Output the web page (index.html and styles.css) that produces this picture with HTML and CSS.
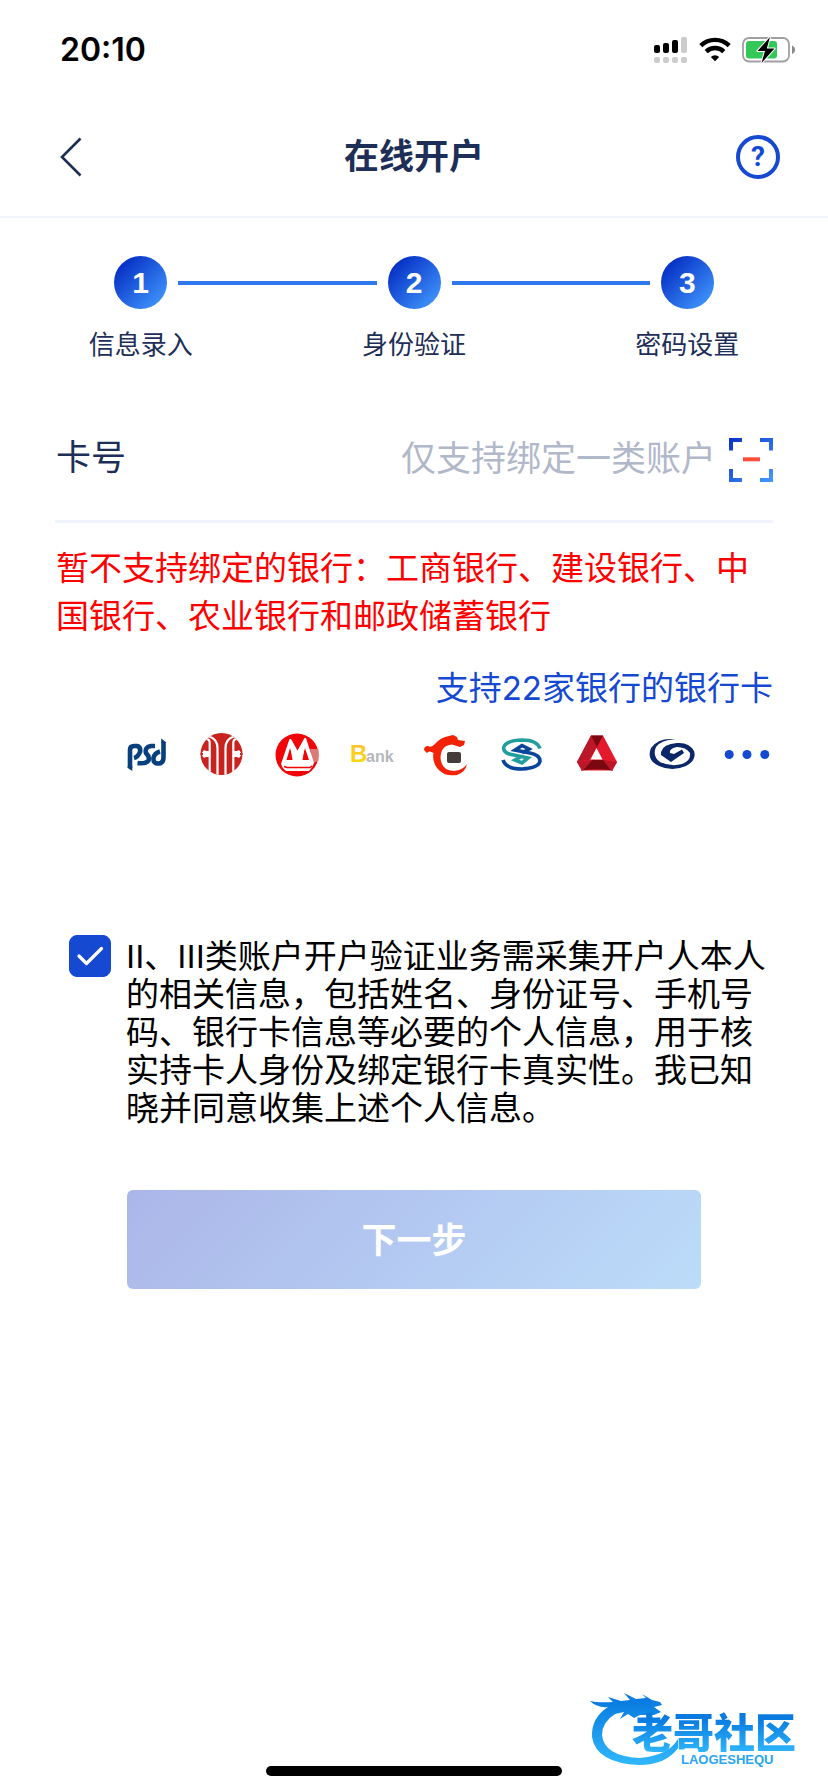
FILE: index.html
```html
<!DOCTYPE html>
<html lang="zh-CN">
<head>
<meta charset="utf-8">
<meta name="viewport" content="width=device-width">
<title>在线开户</title>
<link rel="stylesheet" href="styles.css">
</head>
<body>
<div class="status-bar">
  <time class="clock">20:10</time>
  <div class="status-icons">
    <svg width="34" height="26" viewBox="0 0 34 26" aria-hidden="true">
      <g fill="#000"><rect y="8" width="6" height="8" rx="2"/><rect x="9" y="6" width="6" height="10" rx="2"/><rect x="18" y="3" width="6" height="13" rx="2"/></g>
      <g fill="#ccc"><rect x="27" width="6" height="16" rx="2"/><rect y="20" width="6" height="6" rx="2"/><rect x="9" y="20" width="6" height="6" rx="2"/><rect x="18" y="20" width="6" height="6" rx="2"/><rect x="27" y="20" width="6" height="6" rx="2"/></g>
    </svg>
    <svg width="32" height="26" viewBox="0 0 32 26" aria-hidden="true">
      <g fill="none" stroke="#000" stroke-width="4.4"><path d="M1.8 8.600a20.400 20.400 0 0 1 28.400 0"/><path d="M7.200 14.600a12.600 12.600 0 0 1 17.600 0"/></g>
      <path d="M16 24.200l-4.200-4.300a6.300 6.300 0 0 1 8.400 0z"/>
    </svg>
    <svg width="54" height="26" viewBox="0 0 54 26" aria-hidden="true">
      <rect x="1" y="1" width="46" height="23.500" rx="6" fill="none" stroke="#a0a0a0" stroke-width="1.800"/>
      <path d="M50 8.600q3 1.200 3 4.200t-3 4.200z" fill="#8a8a8a"/>
      <rect x="4" y="4" width="31" height="17.500" rx="3" fill="#34c759"/>
      <path d="M28 0L15.500 14h7.500L19.500 26L32.500 11.500h-7.700z" fill="#000" stroke="#fff" stroke-width="2" paint-order="stroke" stroke-linejoin="round"/>
    </svg>
  </div>
</div>

<header class="nav">
  <button class="nav-button back" type="button" aria-label="返回">
    <svg width="22" height="40" viewBox="0 0 22 40" aria-hidden="true"><path d="M20.500 1.500L2 20l18.500 18.500" fill="none" stroke="#1d2e57" stroke-width="2.600"/></svg>
  </button>
  <h1 class="title">在线开户</h1>
  <button class="nav-button help" type="button" aria-label="帮助">?</button>
</header>

<main class="content">
  <ol class="steps">
    <li class="step"><div class="step-track"><span class="step-number">1</span></div><span class="step-label">信息录入</span></li>
    <li class="step"><div class="step-track"><span class="step-number">2</span></div><span class="step-label">身份验证</span></li>
    <li class="step"><div class="step-track"><span class="step-number">3</span></div><span class="step-label">密码设置</span></li>
  </ol>

  <form class="form">
    <div class="field">
      <label class="field-label" for="card">卡号</label>
      <input class="field-input" id="card" type="text" inputmode="numeric" placeholder="仅支持绑定一类账户">
      <button class="scan" type="button" aria-label="扫描银行卡">
        <svg width="44" height="50" viewBox="0 -6 44 50" aria-hidden="true">
          <defs><linearGradient id="scan-fill" gradientUnits="userSpaceOnUse" x1="0" y1="0" x2="44" y2="44"><stop stop-color="#0930c5"/><stop offset="1" stop-color="#439bff"/></linearGradient></defs>
          <path d="M2 12.500V2h11M31 2h11v10.500M42 31v11H31M13 42H2V31" fill="none" stroke="url(#scan-fill)" stroke-width="4"/>
          <path d="M14 21.300h17" stroke="#ff4d3b" stroke-width="4"/>
        </svg>
      </button>
    </div>

    <p class="warning">暂不支持绑定的银行：工商银行、建设银行、中国银行、农业银行和邮政储蓄银行</p>
    <a class="bank-link" href="#banks">支持22家银行的银行卡</a>

    <ul class="banks" id="banks">
      <li><svg class="bank" viewBox="0 0 46 46" aria-hidden="true">
        <g fill="none" stroke="#08407f" stroke-width="4.600">
          <path d="M6 37V19Q6 15 10 15H13Q17 16 16 21Q14 26 10 27"/>
          <path d="M31 15H27Q20.500 16 22 22Q26 26 24.500 29.500Q22 33 13.500 32"/>
          <path d="M39.500 11V26Q39.500 32 35 32.500Q29 33 29.500 27Q30.500 22 36 20.500"/>
        </g>
        <path fill="#08407f" d="M3.700 35V37L8.300 40V35ZM37.200 12V7.500L41.800 11V12Z"/>
      </svg></li>
      <li><svg class="bank" viewBox="0 0 46 46" aria-hidden="true"><defs><clipPath id="citic-round"><circle cx="22.500" cy="23" r="21"/></clipPath></defs><g clip-path="url(#citic-round)">
        <path fill="#c9231f" d="M0 0H46V46H0Z"/>
        <g fill="none" stroke="#fff" stroke-width="2.200"><path d="M10.700 46V12Q10.700 8 7 8"/><path d="M10 5.500Q18.500 8 18.500 17V46"/><path d="M34.300 46V12Q34.300 8 38 8"/><path d="M35 5.500Q26.500 8 26.500 17V46"/></g>
        <path d="M10 20H7L5 19L2 23L5 27L7 26H10M35 20H38L40 19L43 23L40 27L38 26H35" fill="#fff"/>
        <path d="M0 22h4v2H0zM41 22h5v2h-5z" fill="#c9231f"/></g></svg></li>
      <li><svg class="bank" viewBox="0 0 46 46" aria-hidden="true"><circle cx="23" cy="24" r="21.500" fill="#f20509"/><path d="M36 18h8.500v12l-6 2z" fill="#d97b78"/>
        <path fill="#fff" d="M7 33L15.500 8H17L23.500 19.500L30.500 7H32L40 32Q38 37 35 40H12Q8 37 7 33Z"/>
        <path d="M10 35.500L13 36.500H36L38 35" fill="none" stroke="#f20509" stroke-width="1.500"/><path fill="#f20509" d="M16 17L20 29H12.500ZM31 17L35 29H27.500Z"/><path fill="#fff" d="M16.500 17L23.500 31L30.500 17L28 32H19Z"/></svg></li>
      <li><svg class="bank" viewBox="0 0 46 46" role="img" aria-label="Bank"><defs><linearGradient id="gold" x2="0" y2="1"><stop stop-color="#ffc02d"/><stop offset="1" stop-color="#f8dc0e"/></linearGradient></defs><text x="1" y="31" fill="url(#gold)" class="bank-initial">B</text><text x="17" y="31" fill="#b4b7bb" class="bank-rest">ank</text></svg></li>
      <li><svg class="bank" viewBox="0 0 46 46" aria-hidden="true"><path fill="#f32106" d="M0 19Q0 15 4 15Q7 17 11 13Q17 6 25 5L29 4L33 6L34 9L41 10L40 14L36 16L28 13.500Q16.500 14.500 16.500 27Q17.500 39.500 30 40Q39 39 43 33Q41.500 41 33 44Q20 46 13 37Q8 30 9.500 22Q5 19 3 22Z"/><rect x="23" y="21" width="14" height="11" rx="2" fill="#433d3c"/></svg></li>
      <li><svg class="bank" viewBox="0 0 46 46" aria-hidden="true"><g fill="none" stroke-width="3.600"><path stroke="#229e9e" d="M41 17.500Q38 9 23 9Q6 9.500 4.500 17Q5 23 15 24L29 27L23 32L16 29L23 25"/><path stroke="#07469a" d="M4 29Q7 38 23 38Q40 37 41 30Q41 24 31 22L16 19L23 14.500L30 18L23 22"/></g></svg></li>
      <li><svg class="bank" viewBox="0 0 46 46" aria-hidden="true"><path fill="#e31a2d" d="M17 4.500H29L43 31L38 39.500H8L3 31Z"/><path fill="#bc1728" d="M17 4.500L24 16L10 35L3 31Z"/><path fill="#790811" d="M17 4.500H29L23 16ZM11 29H35L39 39.500Q22 37 7 39.500Z"/><path fill="#e31a2d" d="M3 31L11 29L18 29L8 40ZM43 31L36 29L30 29L38 40Z"/><path fill="#bc1728" d="M3 31L9 39.500L18 29ZM43 31L37 39.500L29 29Z"/><path fill="#fff" d="M22.500 17L28.500 28.500H16.500Z"/></svg></li>
      <li><svg class="bank" viewBox="0 0 46 46" aria-hidden="true"><path fill="#0b2669" d="M27 8.500Q10 6 2 17Q-3 29 10 35Q23 41 37 35Q48 29 45 20Q40 11 28 12Q14 13 12 21V24L22 31L35 22L33 18.500L25 23L21 22Q20 17.500 28 16Q37 16 41 22Q42 30 33 33Q22 36 11 31Q3 25 7 16Q13 8 27 8.500Z"/></svg></li>
      <li><svg class="bank" viewBox="0 0 46 46" role="img" aria-label="更多"><g fill="#1549d1"><circle cx="5.200" cy="23.500" r="4.500"/><circle cx="23" cy="23.500" r="4.500"/><circle cx="40.800" cy="23.500" r="4.500"/></g></svg></li>
    </ul>

    <div class="agreement">
      <span class="check">
        <input class="check-input" id="agree" type="checkbox" checked>
        <svg class="check-mark" viewBox="0 0 42 42" aria-hidden="true"><path d="M10 21l7.500 7.500L32.500 13.500" fill="none" stroke="#fff" stroke-width="3.200" stroke-linecap="round" stroke-linejoin="round"/></svg>
      </span>
      <label class="agreement-text" for="agree">II、III类账户开户验证业务需采集开户人本人的相关信息，包括姓名、身份证号、手机号码、银行卡信息等必要的个人信息，用于核实持卡人身份及绑定银行卡真实性。我已知晓并同意收集上述个人信息。</label>
    </div>

    <button class="submit" type="submit">下一步</button>
  </form>
</main>

<div class="watermark">
  <svg class="watermark-dragon" viewBox="0 0 258 112" aria-hidden="true">
    <defs><linearGradient id="sea" gradientUnits="userSpaceOnUse" x1="0" y1="20" x2="0" y2="82"><stop stop-color="#087ae0"/><stop offset="1" stop-color="#2fb5fb"/></linearGradient></defs>
    <path fill="url(#sea)" d="M20 21Q28 23 43 22L38 17L51 21L60 20L54 13L66 19L76 18L72 14L82 20L90 22L92 25L84 27L91 32L84 35L70 35L64 38L58 34L50 39L54 32L45 34Q32 42 32 55Q34 76 69 78Q98 76 108 59V68Q96 85 69 85Q26 83 22 57Q21 38 38 27Q27 28 20 21Z"/>
  </svg>
  <span class="watermark-name">老哥社区</span>
  <span class="watermark-latin">LAOGESHEQU</span>
</div>
<div class="home-indicator"></div>
</body>
</html>
```

FILE: styles.css
```css
* { box-sizing: border-box; }

body {
  position: relative;
  display: flex;
  flex-direction: column;
  min-height: 100vh;
  margin: 0;
  background: #fff;
  color: #1d2e57;
  font-family: "Liberation Sans", "Noto Sans CJK SC", sans-serif;
}

button {
  padding: 0;
  border: 0;
  background: none;
  font-family: inherit;
}

svg { display: block; }

.status-bar {
  display: flex;
  align-items: center;
  justify-content: space-between;
  height: 98px;
  padding: 2px 32px 0 60px;
  color: #000;
}

.clock {
  font: 600 32px/40px Inter, sans-serif;
}

.status-icons {
  display: flex;
  gap: 11px;
}

.nav {
  display: grid;
  grid-template-columns: 1fr auto 1fr;
  align-items: center;
  height: 120px;
  padding: 0 48px 0 60px;
  border-bottom: 2px solid #f2f6fa;
}

.back { justify-self: start; }

.title {
  margin: 0;
  padding-right: 12px;
  font-size: 35px;
  line-height: 48px;
  font-weight: 700;
}

.help {
  justify-self: end;
  width: 44px;
  height: 44px;
  border: 4px solid #1549d1;
  border-radius: 50%;
  color: #1549d1;
  font: 700 28px/36px Roboto, sans-serif;
}

.steps {
  display: grid;
  grid-template-columns: repeat(3, 1fr);
  margin: 0;
  padding: 38px 4px 0;
  list-style: none;
}

.step { text-align: center; }

.step-track {
  display: flex;
  align-items: center;
  gap: 11px;
}

.step-track::before,
.step-track::after {
  content: "";
  flex: 1;
  height: 4px;
  background: #2f78ee;
}

.step:first-child .step-track::before,
.step:last-child .step-track::after {
  visibility: hidden;
}

.step-number {
  width: 53px;
  height: 53px;
  border-radius: 50%;
  background: linear-gradient(135deg, #032bc2 10%, #439bff 95%);
  color: #fff;
  font-size: 30px;
  font-weight: 700;
  line-height: 54px;
}

.step-label {
  display: block;
  margin-top: 18px;
  font-size: 26px;
  line-height: 36px;
}

.form {
  display: flex;
  flex-direction: column;
  padding: 31px 55px 0;
}

.field {
  display: flex;
  align-items: center;
  height: 129px;
  border-bottom: 3px solid #eff4fa;
  font-size: 35px;
  line-height: 52px;
}

.field-label {
  padding: 2px 0 0 1px;
}

.field-input {
  flex: 1;
  height: 56px;
  min-width: 0;
  padding: 3px 0 0;
  border: 0;
  outline: 0;
  background: none;
  color: inherit;
  font: inherit;
  text-align: right;
}

.field-input::placeholder {
  color: #b1b8c9;
  opacity: 1;
}

.scan { margin-left: 13px; }

.warning {
  margin: 22px 0 0;
  padding-left: 1px;
  color: #f00;
  font-size: 33px;
  line-height: 48px;
}

.bank-link {
  align-self: flex-end;
  margin-top: 23px;
  color: #1549d1;
  font-family: Inter, "Noto Sans CJK SC", sans-serif;
  font-size: 33px;
  line-height: 48px;
  text-decoration: none;
}

.banks {
  display: flex;
  justify-content: space-between;
  margin: 19px 0 0;
  padding: 0 3px 0 69px;
  list-style: none;
}

.bank {
  width: 46px;
  height: 46px;
}

.bank-initial { font: 700 24px "Liberation Sans", sans-serif; }

.bank-rest { font: 700 16px "Liberation Sans", sans-serif; }

.agreement {
  display: flex;
  align-items: flex-start;
  gap: 15px;
  margin-top: 158px;
  padding-left: 14px;
}

.check {
  display: grid;
  flex: none;
  width: 42px;
  height: 42px;
}

.check-input,
.check-mark {
  grid-area: 1 / 1;
  width: 42px;
  height: 42px;
  margin: 0;
}

.check-input {
  appearance: none;
  border: 1px solid #1549d1;
  border-radius: 8px;
}

.check-input:checked { background: #1549d1; }

.check-mark { pointer-events: none; }

.agreement-text {
  padding-top: 3px;
  color: #000;
  font-size: 33px;
  line-height: 38px;
}

.submit {
  height: 99px;
  margin: 62px 72px 0;
  padding-bottom: 4px;
  border-radius: 6px;
  background: linear-gradient(135deg, #abb6e8, #b3c8f1 48%, #bcdcf9);
  color: #fff;
  font-size: 35px;
  font-weight: 700;
}

/* Floats over the bottom corner of the page */
.watermark {
  position: absolute;
  right: 0;
  bottom: 0;
  display: grid;
  grid-template-rows: 30px 42px 16px;
  width: 258px;
  height: 112px;
  padding-left: 62px;
}

.watermark-dragon {
  grid-area: 1 / 1 / 4 / 2;
  width: 258px;
  height: 112px;
  margin-left: -62px;
}

.watermark-name {
  grid-area: 2 / 1;
  background: linear-gradient(#087ae0 20%, #2fb5fb);
  background-clip: text;
  color: transparent;
  font: 900 41px/40px "Noto Sans CJK SC", sans-serif;
  white-space: nowrap;
}

.watermark-latin {
  grid-area: 3 / 1;
  padding-left: 49px;
  color: #2aa5f2;
  font: 700 13px/16px "Liberation Sans", sans-serif;
}

.home-indicator {
  width: 296px;
  height: 10px;
  margin: auto auto 16px;
  border-radius: 5px;
  background: #000;
}
```
